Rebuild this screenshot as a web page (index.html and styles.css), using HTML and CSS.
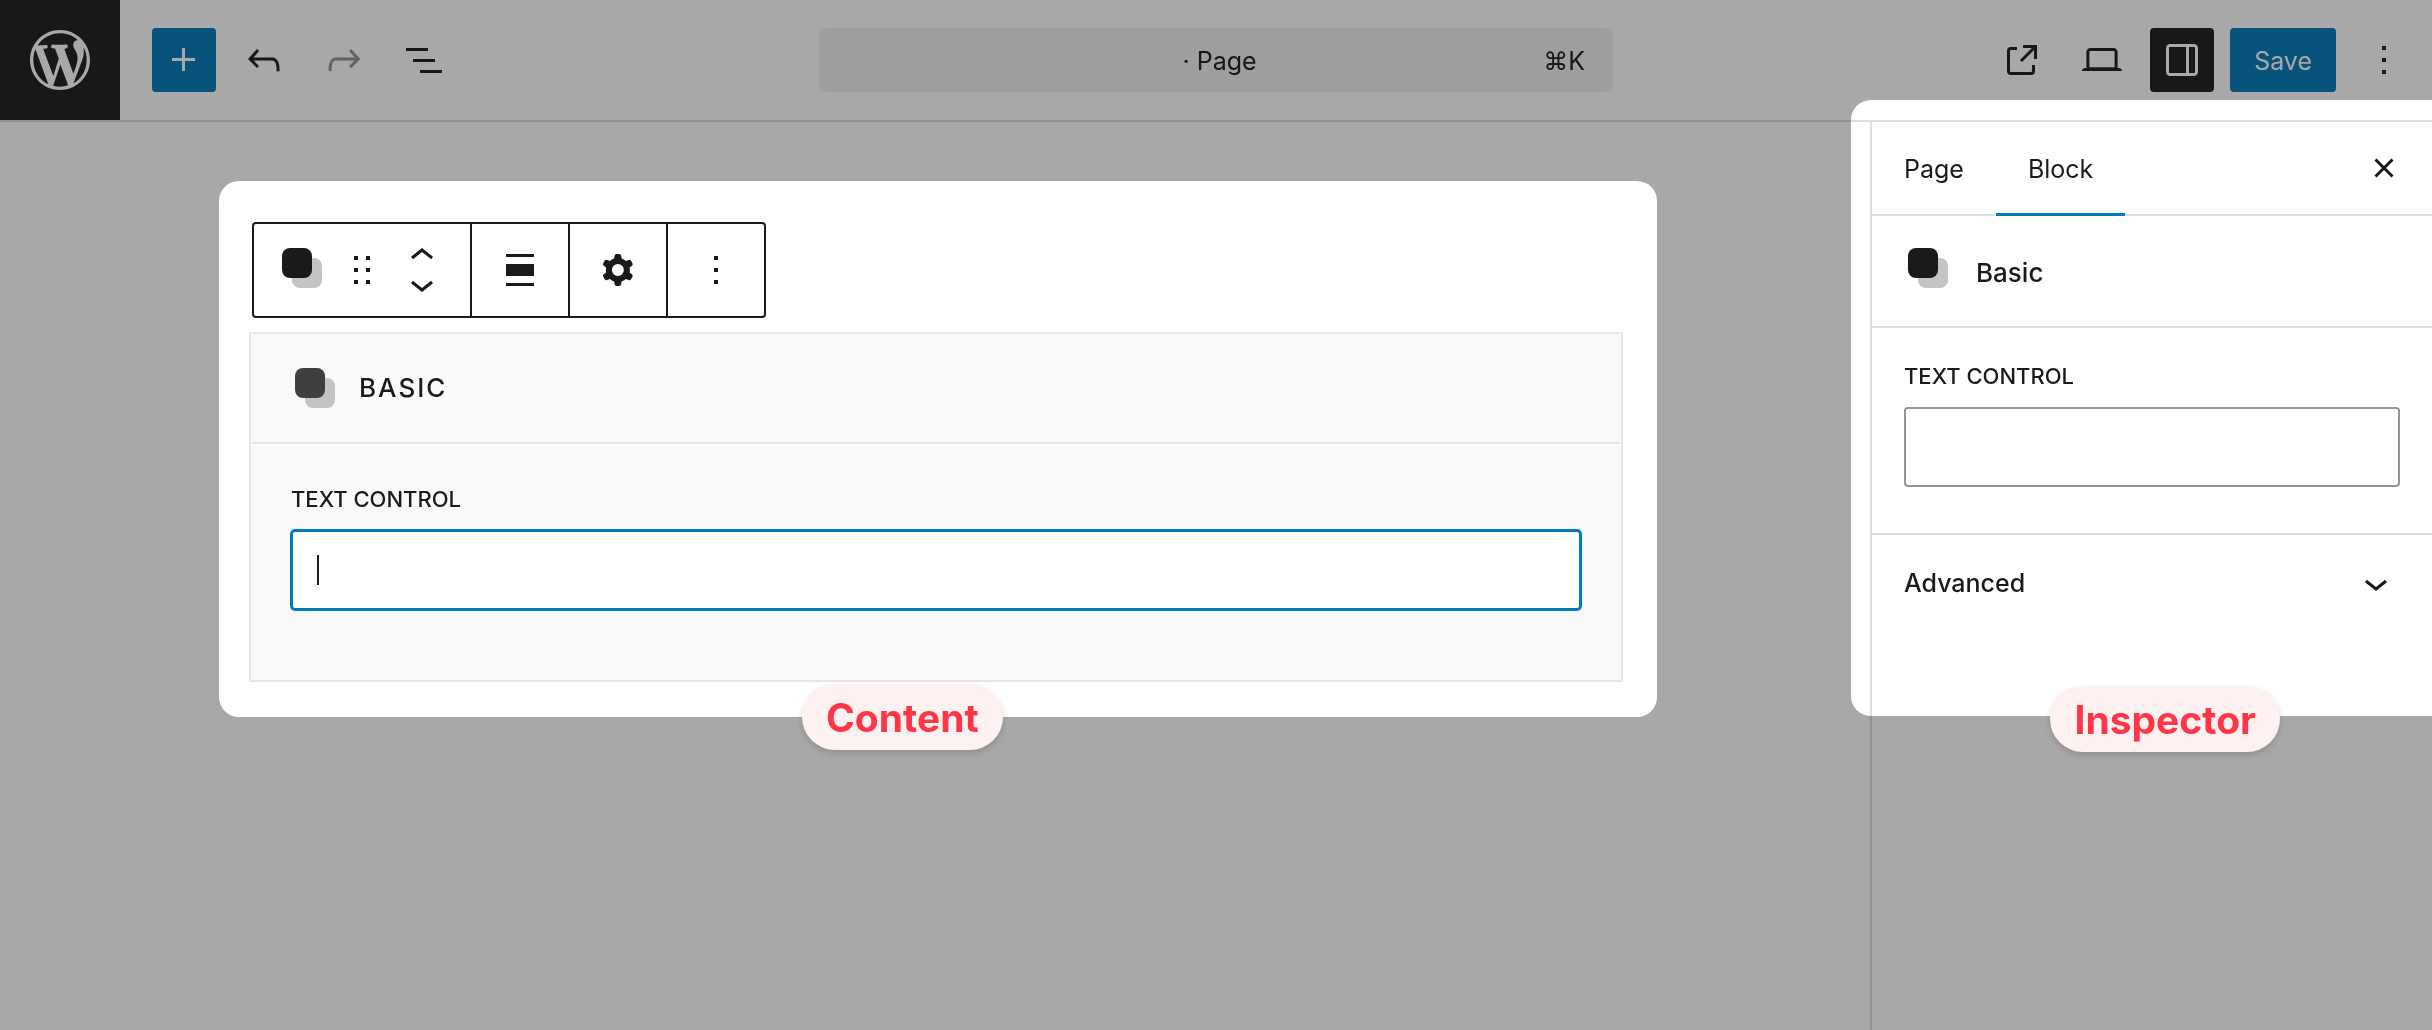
FILE: index.html
```html
<!DOCTYPE html>
<html lang="en">
<head>
    <meta charset="UTF-8">
    <meta name="viewport" content="width=device-width, initial-scale=1.0">
    <title>Page editor</title>
    <link rel="stylesheet" href="styles.css">
</head>
<body>
    <header class="header">
        <div class="header-left">
            <a class="site-logo" href="#" aria-label="View pages">
                <svg viewBox="-2 -2 24 24"><path d="M20 10c0-5.51-4.49-10-10-10C4.48 0 0 4.49 0 10c0 5.52 4.48 10 10 10 5.51 0 10-4.48 10-10zM7.78 15.37L4.37 6.22c.55-.02 1.17-.08 1.17-.08.5-.06.44-1.13-.06-1.11 0 0-1.45.11-2.37.11-.18 0-.37 0-.58-.01C4.12 2.69 6.87 1.11 10 1.11c2.33 0 4.45.87 6.05 2.34-.68-.11-1.65.39-1.65 1.58 0 .74.45 1.36.9 2.1.35.61.55 1.36.55 2.46 0 1.49-1.4 5-1.4 5l-3.03-8.37c.54-.02.82-.17.82-.17.5-.05.44-1.25-.06-1.22 0 0-1.44.12-2.38.12-.87 0-2.33-.12-2.33-.12-.5-.03-.56 1.2-.06 1.22l.92.08 1.26 3.41zM17.41 10c.24-.64.74-1.87.43-4.25.7 1.29 1.05 2.71 1.05 4.25 0 3.29-1.73 6.24-4.4 7.78.97-2.59 1.94-5.2 2.92-7.78zM6.1 18.09C3.12 16.65 1.11 13.53 1.11 10c0-1.3.23-2.48.72-3.59C3.25 10.3 4.67 14.2 6.1 18.09zm4.03-6.63l2.58 6.98c-.86.29-1.76.45-2.71.45-.79 0-1.57-.11-2.29-.33.81-2.38 1.62-4.74 2.42-7.1z"/></svg>
            </a>
            <button class="icon-button primary" aria-label="Add block">
                <svg class="icon" viewBox="0 0 24 24"><path d="M11 12.5V17.5H12.5V12.5H17.5V11H12.5V6H11V11H6V12.5H11Z"/></svg>
            </button>
            <button class="icon-button" aria-label="Undo">
                <svg class="icon" viewBox="0 0 24 24"><path d="M18.3 11.7c-.6-.6-1.4-.9-2.3-.9H6.7l2.9-3.3-1.1-1-4.5 5L8.5 16l1-1-2.7-2.7H16c.5 0 .9.2 1.3.5 1 1 1 3.4 1 4.5v.3h1.5v-.2c0-1.5 0-4.3-1.5-5.7z"/></svg>
            </button>
            <button class="icon-button" aria-label="Redo" disabled>
                <svg class="icon" viewBox="0 0 24 24"><path d="M15.6 6.5l-1.1 1 2.9 3.3H8c-.9 0-1.7.3-2.3.9-1.4 1.5-1.4 4.2-1.4 5.6v.2h1.5v-.3c0-1.1 0-3.5 1-4.5.3-.3.7-.5 1.3-.5h9.2L14.5 15l1.1 1.1 4.6-4.6-4.6-5z"/></svg>
            </button>
            <button class="icon-button" aria-label="Document overview">
                <svg class="icon" viewBox="0 0 24 24"><path d="M3 6h11v1.5H3V6Zm3.5 5.5h11V13h-11v-1.5ZM21 17H10v1.5h11V17Z"/></svg>
            </button>
        </div>

        <button class="document-bar">
            <span class="document-title">&nbsp;· Page</span>
            <span class="document-shortcut">⌘K</span>
        </button>

        <div class="header-right">
            <button class="icon-button" aria-label="View page">
                <svg class="icon" viewBox="0 0 24 24"><path d="M19.5 4.5h-7V6h4.44l-5.97 5.97 1.06 1.06L18 7.06v4.44h1.5v-7Zm-13 1a2 2 0 0 0-2 2v10a2 2 0 0 0 2 2h10a2 2 0 0 0 2-2v-3H17v3a.5.5 0 0 1-.5.5h-10a.5.5 0 0 1-.5-.5v-10a.5.5 0 0 1 .5-.5h3V5.5h-3Z"/></svg>
            </button>
            <button class="icon-button" aria-label="Preview">
                <svg class="icon" viewBox="0 0 24 24"><path d="M20.5 16h-.7V8c0-1.1-.9-2-2-2H6.2c-1.1 0-2 .9-2 2v8h-.7c-.8 0-1.5.7-1.5 1.5h20c0-.8-.7-1.5-1.5-1.5zM5.7 8c0-.3.2-.5.5-.5h11.6c.3 0 .5.2.5.5v7.6H5.7V8z"/></svg>
            </button>
            <button class="icon-button pressed" aria-label="Settings" aria-pressed="true">
                <svg class="icon" viewBox="0 0 24 24"><path fill-rule="evenodd" d="M18 4H6c-1.1 0-2 .9-2 2v12c0 1.1.9 2 2 2h12c1.1 0 2-.9 2-2V6c0-1.1-.9-2-2-2zm-4 14.5H6c-.3 0-.5-.2-.5-.5V6c0-.3.2-.5.5-.5h8v13zm4.5-.5c0 .3-.2.5-.5.5h-2.5v-13H18c.3 0 .5.2.5.5v12z"/></svg>
            </button>
            <button class="save-button primary">Save</button>
            <button class="icon-button" aria-label="Options">
                <svg class="icon" viewBox="0 0 24 24"><path d="M13 19h-2v-2h2v2zm0-6h-2v-2h2v2zm0-6h-2V5h2v2z"/></svg>
            </button>
        </div>
    </header>

    <div class="editor">
        <main class="canvas">
            <div class="toolbar" role="toolbar" aria-label="Block tools">
                <div class="toolbar-group">
                    <button class="tool" aria-label="Basic">
                        <svg class="block-icon" viewBox="0 0 48 48"><rect class="back" x="14" y="12" width="30" height="30" rx="8"/><rect class="front" x="4" y="2" width="30" height="30" rx="8"/></svg>
                    </button>
                    <button class="tool drag" aria-label="Drag">
                        <svg class="icon" viewBox="0 0 24 24"><path d="M8 7h2V5H8v2zm0 6h2v-2H8v2zm0 6h2v-2H8v2zm6-14v2h2V5h-2zm0 8h2v-2h-2v2zm0 6h2v-2h-2v2z"/></svg>
                    </button>
                    <div class="movers">
                        <button class="mover" aria-label="Move up">
                            <svg class="icon" viewBox="0 0 24 24"><path d="M6.5 12.4L12 8l5.5 4.4-.9 1.2L12 10l-4.5 3.6-1-1.2z"/></svg>
                        </button>
                        <button class="mover" aria-label="Move down">
                            <svg class="icon" viewBox="0 0 24 24"><path d="M17.5 11.6L12 16l-5.5-4.4.9-1.2L12 14l4.5-3.6 1 1.2z"/></svg>
                        </button>
                    </div>
                </div>
                <div class="toolbar-group">
                    <button class="tool" aria-label="Align">
                        <svg class="icon" viewBox="0 0 24 24"><path d="M19 5.5H5V4h14v1.5ZM19 20H5v-1.5h14V20ZM5 9h14v6H5V9Z"/></svg>
                    </button>
                </div>
                <div class="toolbar-group">
                    <button class="tool" aria-label="Block settings">
                        <svg class="icon" viewBox="0 0 24 24"><path fill-rule="evenodd" d="M10.289 4.836A1 1 0 0111.275 4h1.306a1 1 0 01.987.836l.244 1.466c.787.26 1.503.679 2.108 1.218l1.393-.522a1 1 0 011.216.437l.653 1.13a1 1 0 01-.23 1.273l-1.148.944a6.025 6.025 0 010 2.435l1.149.946a1 1 0 01.23 1.272l-.653 1.13a1 1 0 01-1.216.437l-1.394-.522c-.605.54-1.32.958-2.108 1.218l-.244 1.466a1 1 0 01-.987.836h-1.306a1 1 0 01-.986-.836l-.244-1.466a5.995 5.995 0 01-2.108-1.218l-1.394.522a1 1 0 01-1.217-.436l-.653-1.131a1 1 0 01.23-1.272l1.149-.946a6.026 6.026 0 010-2.435l-1.148-.944a1 1 0 01-.23-1.272l.653-1.131a1 1 0 011.217-.437l1.393.522a5.994 5.994 0 012.108-1.218l.244-1.466zM14.929 12a3 3 0 11-6 0 3 3 0 016 0z"/></svg>
                    </button>
                </div>
                <div class="toolbar-group">
                    <button class="tool" aria-label="Options">
                        <svg class="icon" viewBox="0 0 24 24"><path d="M13 19h-2v-2h2v2zm0-6h-2v-2h2v2zm0-6h-2V5h2v2z"/></svg>
                    </button>
                </div>
            </div>

            <section class="block">
                <div class="block-header">
                    <svg class="block-icon soft" viewBox="0 0 48 48"><rect class="back" x="14" y="12" width="30" height="30" rx="8"/><rect class="front" x="4" y="2" width="30" height="30" rx="8"/></svg>
                    <h2 class="block-title">Basic</h2>
                </div>
                <div class="block-body">
                    <label class="field-label" for="content-text">Text control</label>
                    <div class="field">
                        <input class="text-input focused" id="content-text" type="text">
                        <span class="caret"></span>
                    </div>
                </div>
            </section>
        </main>

        <aside class="sidebar">
            <div class="tabs" role="tablist">
                <button class="tab" role="tab" aria-selected="false">Page</button>
                <button class="tab active" role="tab" aria-selected="true">Block</button>
                <button class="icon-button close" aria-label="Close settings">
                    <svg class="icon" viewBox="0 0 24 24"><path d="M12 13.06l3.712 3.713 1.061-1.06L13.061 12l3.712-3.712-1.06-1.06L12 10.938 8.288 7.227l-1.061 1.06L10.939 12l-3.712 3.712 1.06 1.061L12 13.061z"/></svg>
                </button>
            </div>
            <div class="block-card">
                <svg class="block-icon" viewBox="0 0 48 48"><rect class="back" x="14" y="12" width="30" height="30" rx="8"/><rect class="front" x="4" y="2" width="30" height="30" rx="8"/></svg>
                <h2 class="card-title">Basic</h2>
            </div>
            <div class="panel">
                <label class="field-label" for="inspector-text">Text control</label>
                <input class="text-input" id="inspector-text" type="text">
            </div>
            <button class="advanced" aria-expanded="false">
                Advanced
                <svg class="icon" viewBox="0 0 24 24"><path d="M17.5 11.6L12 16l-5.5-4.4.9-1.2L12 14l4.5-3.6 1 1.2z"/></svg>
            </button>
        </aside>
    </div>

    <!-- dims everything except the two spotlights -->
    <div class="dim">
        <div class="spotlight spotlight-content"></div>
        <div class="spotlight spotlight-inspector"></div>
    </div>
    <div class="badge badge-content">Content</div>
    <div class="badge badge-inspector">Inspector</div>
</body>
</html>
```
FILE: styles.css
```css
* { box-sizing: border-box; }
body {
    position: relative;
    display: flex;
    flex-direction: column;
    min-height: 100vh;
    margin: 0;
    background: #fff;
    color: #1a1a1a;
    font-family: Inter, "Liberation Sans", sans-serif;
    font-size: 25px;
    line-height: 32px;
}
button {
    padding: 0;
    border: none;
    background: none;
    color: inherit;
    font: inherit;
    cursor: pointer;
}
h2 { margin: 0; font-size: 26px; font-weight: 500; }
svg { display: block; flex: none; fill: currentColor; }
.icon { width: 48px; height: 48px; }

.block-icon { width: 48px; height: 48px; }
.block-icon .front { fill: #1a1a1a; }
.block-icon .back { fill: #c4c4c4; }
.block-icon.soft .front { fill: #3f3f3f; }

/* Header */
.header {
    display: grid;
    grid-template-columns: 1fr minmax(0, 794px) 1fr;
    align-items: center;
    border-bottom: 2px solid #ddd;
    color: #242424;
}
.header-left, .header-right { display: flex; align-items: center; gap: 16px; }
.header-right { justify-content: flex-end; padding-right: 16px; }
.site-logo {
    display: flex;
    align-items: center;
    justify-content: center;
    width: 120px;
    height: 120px;
    margin-right: 16px;
    background: #242424;
    color: #fff;
}
.site-logo svg { width: 72px; height: 72px; }
.icon-button {
    display: flex;
    align-items: center;
    justify-content: center;
    width: 64px;
    height: 64px;
    border-radius: 4px;
}
.icon-button:disabled { color: #949494; }
.primary { background: #0c7dba; color: #fff; }
.pressed { background: #242424; color: #fff; }
.save-button { height: 64px; padding: 2px 24px 0; border-radius: 4px; }
.document-bar {
    display: grid;
    grid-template-columns: 1fr auto 1fr;
    align-items: center;
    height: 64px;
    padding: 2px 28px 0;
    border-radius: 8px;
    background: #f0f0f0;
}
.document-title { grid-column: 2; }
.document-shortcut { text-align: right; }

/* Editor */
.editor { display: flex; flex: 1; }
.canvas { flex: 1; min-width: 0; padding: 100px 247px 0 249px; }
.toolbar {
    display: flex;
    width: max-content;
    height: 96px;
    margin: 0 0 14px 3px;
    border: 2px solid #1a1a1a;
    border-radius: 4px;
}
.toolbar-group { display: flex; }
.toolbar-group + .toolbar-group { border-left: 2px solid #1a1a1a; }
.tool {
    display: flex;
    align-items: center;
    justify-content: center;
    width: 96px;
}
.drag { width: 24px; }
.movers {
    display: flex;
    flex-direction: column;
    justify-content: center;
    width: 96px;
}
.mover {
    display: flex;
    align-items: center;
    justify-content: center;
    height: 28px;
}

.block { border: 2px solid #e6e6e6; background: #f9f9f9; }
.block-header {
    display: flex;
    gap: 20px;
    padding: 32px 40px 28px;
    border-bottom: 2px solid #e6e6e6;
}
.block-title { line-height: 44px; letter-spacing: 2px; text-transform: uppercase; }
.block-body { padding: 40px 40px 70px; }
.field-label {
    display: block;
    margin-bottom: 16px;
    font-size: 22px;
    font-weight: 500;
    line-height: 30px;
    text-transform: uppercase;
}
.field { position: relative; }
.text-input {
    display: block;
    width: 100%;
    height: 80px;
    padding: 0 24px;
    border: 2px solid #949494;
    border-radius: 4px;
    outline: none;
    background: #fff;
    color: inherit;
    font: inherit;
}
.text-input.focused { border-color: #007cba; box-shadow: 0 0 0 1px #007cba; }
.caret {
    position: absolute;
    top: 25px;
    left: 26px;
    width: 2px;
    height: 30px;
    background: #1a1a1a;
}

/* Sidebar */
.sidebar { flex: none; width: 562px; border-left: 2px solid #ddd; }
.tabs {
    display: flex;
    align-items: center;
    padding-right: 16px;
    border-bottom: 2px solid #ddd;
}
.tab { height: 94px; margin-bottom: -2px; padding: 0 32px; }
.tab.active { box-shadow: inset 0 -3px #007cba; }
.close { margin-left: auto; }
.block-card {
    display: flex;
    gap: 24px;
    padding: 30px 32px 26px;
    border-bottom: 2px solid #ddd;
}
.card-title { line-height: 54px; }
.panel { padding: 33px 32px 46px; border-bottom: 2px solid #ddd; }
.advanced {
    display: flex;
    align-items: center;
    justify-content: space-between;
    width: 100%;
    height: 96px;
    padding: 0 32px;
    font-weight: 500;
}

/* Spotlights: white leaves the page as it is, grey darkens it */
.dim {
    position: absolute;
    inset: 0;
    overflow: hidden;
    background: #a8a8a8;
    mix-blend-mode: multiply;
    pointer-events: none;
}
.spotlight { position: absolute; background: #fff; }
.spotlight-content {
    top: 181px;
    left: 219px;
    right: 775px;
    height: 536px;
    border-radius: 20px;
}
.spotlight-inspector {
    top: 100px;
    right: 0;
    width: 581px;
    height: 616px;
    border-radius: 20px 0 0 20px;
}
.badge {
    position: absolute;
    padding: 2px 24px 0;
    border-radius: 33px;
    background: #fef1f1;
    box-shadow: 0 3px 6px rgba(0, 0, 0, 0.15);
    color: #ff3646;
    font-size: 39px;
    font-weight: 700;
    line-height: 64px;
}
.badge-content { top: 684px; left: 802px; }
.badge-inspector { top: 686px; right: 152px; }
```
